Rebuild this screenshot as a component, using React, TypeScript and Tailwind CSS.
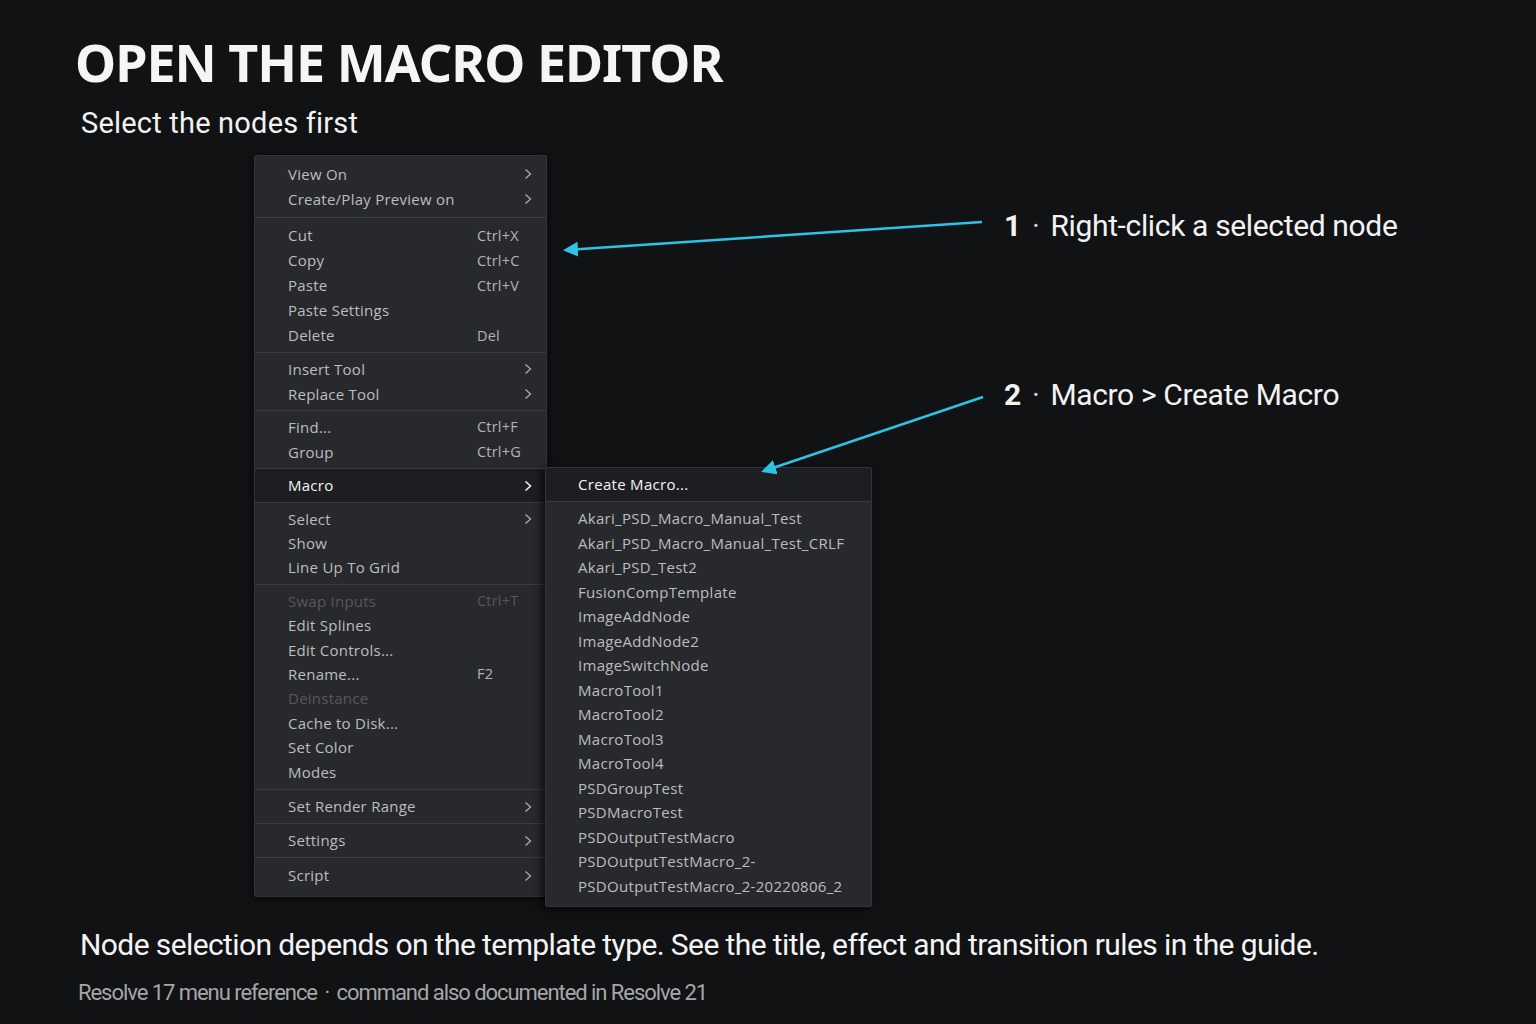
import React from "react";

type Row = { l: string; k?: string; sub?: boolean; dis?: boolean };
type Group = { rows: Row[]; h: string; pad: string; active?: boolean };

const groups: Group[] = [
  { rows: [{ l: "View On", sub: true }, { l: "Create/Play Preview on", sub: true }], h: "h-[25.5px]", pad: "pt-[5px] pb-[5px]" },
  {
    rows: [
      { l: "Cut", k: "Ctrl+X" },
      { l: "Copy", k: "Ctrl+C" },
      { l: "Paste", k: "Ctrl+V" },
      { l: "Paste Settings" },
      { l: "Delete", k: "Del" },
    ],
    h: "h-[25px]",
    pad: "pt-[5px] pb-[4px]",
  },
  { rows: [{ l: "Insert Tool", sub: true }, { l: "Replace Tool", sub: true }], h: "h-[24.5px]", pad: "pt-[4px] pb-[4px]" },
  { rows: [{ l: "Find...", k: "Ctrl+F" }, { l: "Group", k: "Ctrl+G" }], h: "h-[24.5px]", pad: "pt-[4px] pb-[4px]" },
  { rows: [{ l: "Macro", sub: true }], h: "h-[25px]", pad: "pt-[4px] pb-[4px]", active: true },
  { rows: [{ l: "Select", sub: true }, { l: "Show" }, { l: "Line Up To Grid" }], h: "h-[24.3px]", pad: "pt-[4px] pb-[4px]" },
  {
    rows: [
      { l: "Swap Inputs", k: "Ctrl+T", dis: true },
      { l: "Edit Splines" },
      { l: "Edit Controls..." },
      { l: "Rename...", k: "F2" },
      { l: "Deinstance", dis: true },
      { l: "Cache to Disk..." },
      { l: "Set Color" },
      { l: "Modes" },
    ],
    h: "h-[24.4px]",
    pad: "pt-[4px] pb-[5px]",
  },
  { rows: [{ l: "Set Render Range", sub: true }], h: "h-[25px]", pad: "pt-[4px] pb-[4px]" },
  { rows: [{ l: "Settings", sub: true }], h: "h-[25px]", pad: "pt-[4px] pb-[4px]" },
  { rows: [{ l: "Script", sub: true }], h: "h-[25px]", pad: "pt-[5px] pb-[8px]" },
];

const macros = [
  "Akari_PSD_Macro_Manual_Test",
  "Akari_PSD_Macro_Manual_Test_CRLF",
  "Akari_PSD_Test2",
  "FusionCompTemplate",
  "ImageAddNode",
  "ImageAddNode2",
  "ImageSwitchNode",
  "MacroTool1",
  "MacroTool2",
  "MacroTool3",
  "MacroTool4",
  "PSDGroupTest",
  "PSDMacroTest",
  "PSDOutputTestMacro",
  "PSDOutputTestMacro_2-",
  "PSDOutputTestMacro_2-20220806_2",
];

function Chevron({ white }: { white?: boolean }) {
  return (
    <svg width="8" height="12" viewBox="0 0 8 12" className="shrink-0">
      <path d="M1.5 1.5 L6.5 6 L1.5 10.5" fill="none" stroke={white ? "#f2f2f2" : "#a9aaab"} strokeWidth={white ? 1.6 : 1.3} />
    </svg>
  );
}

function Menu() {
  return (
    <div className="relative w-[293px] shrink-0">
      <div className="w-[293px] bg-[#28292d] border border-[#323337] rounded-[2px] shadow-[0_2px_8px_rgba(0,0,0,0.6)] font-['Open_Sans','Noto_Sans',sans-serif] text-[15px] tracking-[0.25px]">
        {groups.map((g, gi) => (
          <div key={gi} className={`${gi > 0 ? "border-t border-[#3b3c40]" : ""} ${g.pad} ${g.active ? "bg-[#1d1e21]" : ""}`}>
            {g.rows.map((r, ri) => (
              <div key={ri} className={`flex items-center ${g.h} pl-[33px] pr-[14px]`}>
                <span
                  className={`w-[189px] whitespace-nowrap ${
                    r.dis ? "text-[#56575a]" : g.active ? "text-[#f4f4f4]" : "text-[#bcbdbe]"
                  }`}
                >
                  {r.l}
                </span>
                {r.k && <span className={`${r.dis ? "text-[#56575a]" : "text-[#b3b4b5]"} text-[14.5px] tracking-[0.2px]`}>{r.k}</span>}
                {r.sub && (
                  <span className="ml-auto flex items-center">
                    <Chevron white={g.active} />
                  </span>
                )}
              </div>
            ))}
          </div>
        ))}
      </div>

      <div className="absolute left-[291px] top-[312px] w-[327px] bg-[#28292d] border border-[#34353a] rounded-[2px] shadow-[-3px_2px_8px_rgba(0,0,0,0.7)] font-['Open_Sans','Noto_Sans',sans-serif] text-[15px] tracking-[0.3px]">
        <div className="bg-[#1d1e21] pt-[4px] pb-[4px]">
          <div className="h-[25px] flex items-center pl-[32px] text-[#f4f4f4]">Create Macro...</div>
        </div>
        <div className="border-t border-[#3b3c40] pt-[4px] pb-[8px]">
          {macros.map((m) => (
            <div key={m} className="h-[24.5px] flex items-center pl-[32px] text-[#bcbdbe] whitespace-nowrap">
              {m}
            </div>
          ))}
        </div>
      </div>
    </div>
  );
}

export default function App() {
  return (
    <div className="relative w-[1536px] h-[1024px] overflow-hidden bg-[#111214] text-white">
      <div className="flex flex-col">
        <h1 className="ml-[75px] mt-[35px] text-[52px] leading-[54px] font-bold tracking-[-1px] font-['Noto_Sans','Open_Sans',sans-serif] text-[#f5f5f5]">
          OPEN THE MACRO EDITOR
        </h1>
        <p className="ml-[81px] mt-[16px] text-[29px] leading-[36px] tracking-[0.2px] font-['Roboto',sans-serif] text-[#f2f2f2]">
          Select the nodes first
        </p>

        <div className="flex mt-[14px] ml-[254px]">
          <Menu />
          <div className="ml-[457px] flex flex-col font-['Roboto',sans-serif] text-[30px] leading-[36px] text-[#f2f2f2] tracking-[-0.35px]">
            <div className="mt-[53px] flex items-center whitespace-nowrap">
              <span className="font-bold">1</span>
              <span className="mx-[11px] text-[#cfcfcf]">·</span>
              <span>Right-click a selected node</span>
            </div>
            <div className="mt-[133px] flex items-center whitespace-nowrap">
              <span className="font-bold">2</span>
              <span className="mx-[11px] text-[#cfcfcf]">·</span>
              <span>Macro &gt; Create Macro</span>
            </div>
          </div>
        </div>

        <p className="ml-[80px] mt-[28px] text-[30px] leading-[40px] tracking-[-0.6px] font-['Roboto',sans-serif] text-[#f4f4f4] whitespace-nowrap">
          Node selection depends on the template type. See the title, effect and transition rules in the guide.
        </p>
        <p className="ml-[78px] mt-[14px] text-[22px] leading-[28px] tracking-[-1.05px] font-['Roboto',sans-serif] text-[#a5a6a7] whitespace-nowrap">
          Resolve 17 menu reference <span className="mx-[3px]">·</span> command also documented in Resolve 21
        </p>
      </div>

      <svg className="absolute inset-0 pointer-events-none" width="1536" height="1024" viewBox="0 0 1536 1024">
        <defs>
          <marker id="ah" viewBox="0 0 10 10" refX="8" refY="5" markerWidth="6" markerHeight="6" orient="auto" markerUnits="strokeWidth">
            <path d="M0 0 L10 5 L0 10 z" fill="#2cc3e6" />
          </marker>
        </defs>
        <line x1="982" y1="222" x2="566" y2="250" stroke="#2cc3e6" strokeWidth="2.5" markerEnd="url(#ah)" />
        <line x1="983" y1="397" x2="764" y2="471" stroke="#2cc3e6" strokeWidth="2.5" markerEnd="url(#ah)" />
      </svg>
    </div>
  );
}
